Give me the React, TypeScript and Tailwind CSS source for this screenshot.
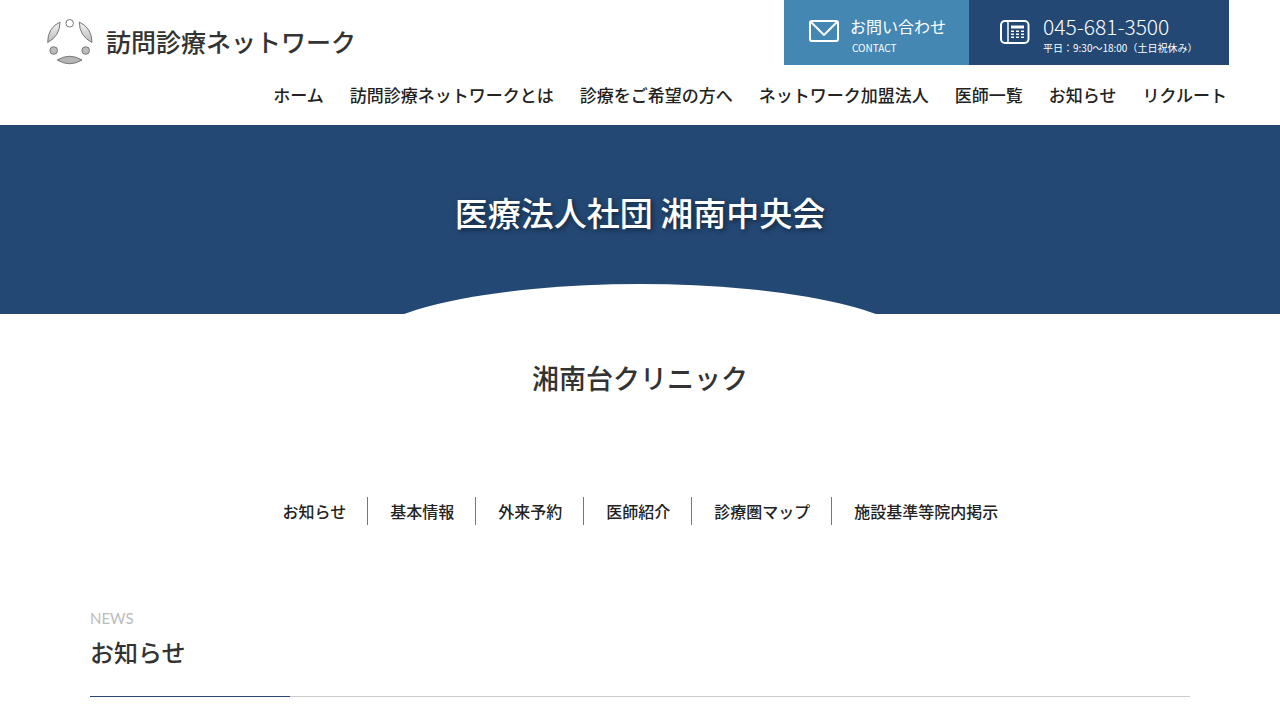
type NavItem = {
  label: string
  href: string
}

const mainNav: NavItem[] = [
  { label: 'ホーム', href: '#home' },
  { label: '訪問診療ネットワークとは', href: '#about' },
  { label: '診療をご希望の方へ', href: '#patients' },
  { label: 'ネットワーク加盟法人', href: '#members' },
  { label: '医師一覧', href: '#doctors' },
  { label: 'お知らせ', href: '#news-list' },
  { label: 'リクルート', href: '#recruit' },
]

const pageNav: NavItem[] = [
  { label: 'お知らせ', href: '#news' },
  { label: '基本情報', href: '#info' },
  { label: '外来予約', href: '#reserve' },
  { label: '医師紹介', href: '#staff' },
  { label: '診療圏マップ', href: '#map' },
  { label: '施設基準等院内掲示', href: '#notice' },
]

export default function App() {
  return (
    <div className="min-h-screen bg-white font-['Noto_Sans_CJK_JP',sans-serif] text-[#333]">
      <Header />
      <main>
        <section className="relative flex h-[189px] items-start justify-center overflow-hidden bg-[#234874] pt-[62px]">
          <h1 className="text-[33px] leading-[50px] font-medium text-white [text-shadow:2px_2px_5px_rgba(0,0,0,0.5)]">医療法人社団 湘南中央会</h1>
          <div className="absolute top-[159px] left-1/2 h-[130px] w-[560px] -translate-x-1/2 rounded-[50%] bg-white" />
        </section>

        <h2 className="mt-11 text-center text-[27px] leading-10 font-medium">湘南台クリニック</h2>

        <nav aria-label="ページ内" className="mt-[99px] flex justify-center">
          {pageNav.map((item) => (
            <a key={item.href} href={item.href} className="border-r border-[#777] pr-[21px] pl-[22px] text-base leading-7 font-medium text-[#222] last:border-r-0">
              {item.label}
            </a>
          ))}
        </nav>

        <section id="news" className="mx-auto mt-[79px] max-w-[1100px]">
          <p className="font-[Lato,sans-serif] text-[15px] leading-7 text-[#bbb]">NEWS</p>
          <h2 className="text-2xl leading-10 font-medium">お知らせ</h2>
          <div className="mt-6 border-t border-[#ccc]">
            <div className="-mt-px h-px w-[200px] bg-[#234874]" />
          </div>
        </section>
      </main>
    </div>
  )
}

function Header() {
  return (
    <header className="h-[125px] pr-[51px] pl-[46px]">
      <div className="flex items-start justify-between">
        <a href="#home" className="mt-[17px] flex items-center gap-3 text-[#333]">
          <LogoMark />
          <span className="text-[25px] leading-[48px] font-medium">訪問診療ネットワーク</span>
        </a>
        <div className="flex h-[65px] text-white">
          <a href="#contact" className="flex w-[185px] gap-[11px] bg-[#4387b2] pt-[18px] pl-[25px]">
            <MailIcon />
            <span className="-mt-1">
              <span className="block text-base leading-6">お問い合わせ</span>
              <span className="block pl-[2px] text-[10px] leading-5">CONTACT</span>
            </span>
          </a>
          <a href="tel:045-681-3500" className="flex w-[260px] gap-[13px] bg-[#234874] pt-[18px] pl-[30px]">
            <PhoneIcon />
            <span className="-mt-1">
              <span className="block text-[21px] leading-6 font-light">045-681-3500</span>
              <span className="block text-[10px] leading-5 whitespace-nowrap">平日：9:30～18:00（土日祝休み）</span>
            </span>
          </a>
        </div>
      </div>
      <nav aria-label="メイン" className="mt-[18px] flex justify-end gap-[26px] pr-[2px]">
        {mainNav.map((item) => (
          <a key={item.href} href={item.href} className="text-[17px] leading-6 font-medium whitespace-nowrap text-[#222]">
            {item.label}
          </a>
        ))}
      </nav>
    </header>
  )
}

function LogoMark() {
  return (
    <svg width="48" height="48" viewBox="0 0 48 48" fill="none" stroke="#777" strokeWidth="1" aria-hidden="true">
      <defs>
        <linearGradient id="leaf" x1="0" y1="0" x2="0" y2="1">
          <stop offset="0" stopColor="#f4f4f4" />
          <stop offset="1" stopColor="#bbb" />
        </linearGradient>
      </defs>
      <circle cx="23.7" cy="6.3" r="3.8" fill="#fff" />
      <path d="M14 5Q1.500 11 1.700 25.500Q14 19 14 5Z" fill="url(#leaf)" />
      <path d="M33.300 5Q46 11 46 25.500Q33.300 19 33.300 5Z" fill="url(#leaf)" />
      <circle cx="7.7" cy="33.500" r="3.8" fill="#bbb" />
      <circle cx="39.7" cy="33.500" r="3.8" fill="#bbb" />
      <path d="M11.300 43Q23.700 35.500 36 43Q23.700 50.500 11.300 43Z" fill="#b5b5b5" />
    </svg>
  )
}

function MailIcon() {
  return (
    <svg width="30" height="26" viewBox="0 0 30 26" fill="none" stroke="currentColor" strokeWidth="2" strokeLinejoin="round" aria-hidden="true">
      <rect x="1" y="3" width="28" height="20" rx="2" />
      <path d="M2 4L15 17L28 4" />
    </svg>
  )
}

function PhoneIcon() {
  return (
    <svg width="31" height="28" viewBox="0 0 31 28" fill="none" stroke="currentColor" aria-hidden="true">
      <rect x="2" y="3" width="27.500" height="22" rx="4" strokeWidth="2" />
      <path d="M9 3V25" strokeWidth="1.500" />
      <path d="M12 9H25" strokeWidth="3" />
      <path d="M12 13.200H25M12 16.200H25M12 19.200H25" strokeWidth="1.500" strokeDasharray="3 2" />
    </svg>
  )
}
